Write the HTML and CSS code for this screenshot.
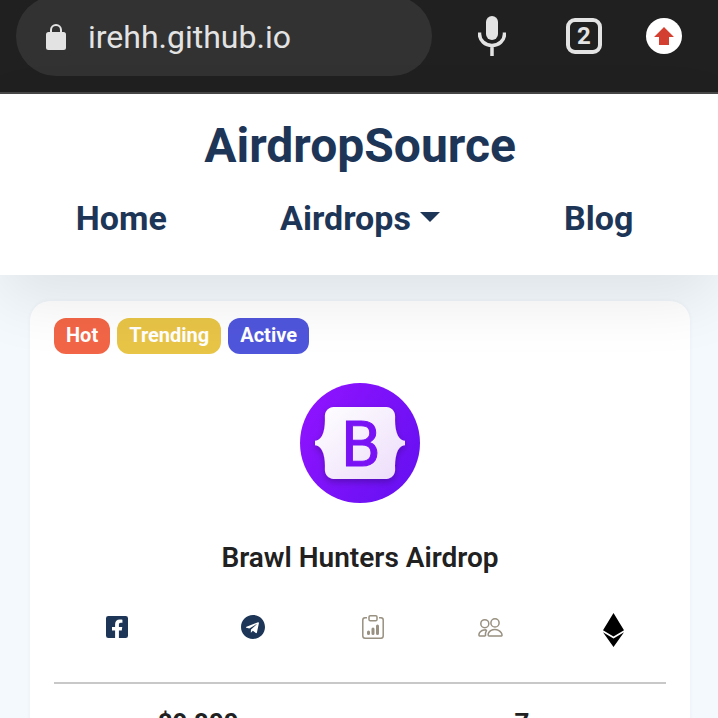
FILE: index.html
```
<!DOCTYPE html>
<html lang="en">
<head>
<meta charset="utf-8">
<meta name="viewport" content="width=device-width, initial-scale=1">
<title>AirdropSource</title>
<link rel="stylesheet" href="styles.css">
</head>
<body>
<div class="browser-bar">
  <label class="address">
    <svg class="lock" viewBox="0 0 20 26" aria-hidden="true"><rect y="8" width="20" height="18" rx="2.5" fill="#e3e3e3"/><path d="M5 9V6a5 5 0 0 1 10 0v3" fill="none" stroke="#e3e3e3" stroke-width="2"/></svg>
    <input class="address-input" type="text" value="irehh.github.io" aria-label="Address" spellcheck="false">
  </label>
  <div class="browser-actions">
    <button class="action" type="button" aria-label="Voice search">
      <svg class="mic" viewBox="0 0 28 40"><rect x="8" width="12" height="24" rx="6" fill="#e3e3e3"/><path d="M1.500 16.500v1.500a12.500 11.500 0 0 0 25 0v-1.500M14 29.500V40" fill="none" stroke="#e3e3e3" stroke-width="3.500"/></svg>
    </button>
    <button class="action tabs" type="button" aria-label="2 tabs">2</button>
    <button class="action update" type="button" aria-label="Update">
      <svg class="arrow" viewBox="0 0 20 18"><path d="M10 0 20 10H15V18H5V10H0Z" fill="#d33f30"/></svg>
    </button>
  </div>
</div>
<header class="site-header">
  <a class="brand" href="#">AirdropSource</a>
  <nav class="nav">
    <a href="#">Home</a>
    <a href="#">Airdrops<span class="caret"></span></a>
    <a href="#">Blog</a>
  </nav>
</header>
<main class="content">
  <article class="card">
    <div class="badges">
      <span class="badge hot">Hot</span>
      <span class="badge trending">Trending</span>
      <span class="badge active">Active</span>
    </div>
    <svg class="logo" viewBox="0 0 120 120" role="img" aria-label="Brawl Hunters">
      <defs>
        <linearGradient id="purple" x1="0" y1="0.200" x2="1" y2="0.800"><stop offset="0" stop-color="#9013ff"/><stop offset="1" stop-color="#6610f2"/></linearGradient>
        <linearGradient id="plate" x1="0" y1="0" x2="1" y2="1"><stop offset="0" stop-color="#ffffff"/><stop offset="1" stop-color="#ecdcfa"/></linearGradient>
        <filter id="drop" x="-20%" y="-20%" width="140%" height="150%"><feDropShadow dx="0" dy="3" stdDeviation="3" flood-color="#000000" flood-opacity="0.250"/></filter>
      </defs>
      <circle cx="60" cy="60" r="60" fill="url(#purple)"/>
      <path filter="url(#drop)" fill="url(#plate)" d="M33.700 24C28.500 24 24.700 28.500 24.900 33.400C25.100 38.100 24.900 44.200 23.400 49.200C21.800 54.200 19.200 57.300 15 57.700V62.300C19.200 62.700 21.800 65.800 23.400 70.800C24.900 75.800 25.100 81.900 24.900 86.600C24.700 91.500 28.500 96 33.700 96H86.300C91.500 96 95.300 91.500 95.100 86.600C94.900 81.900 95.100 75.800 96.600 70.800C98.200 65.800 100.800 62.700 105 62.300V57.700C100.800 57.300 98.200 54.200 96.600 49.200C95.100 44.200 94.900 38.100 95.100 33.400C95.300 28.500 91.500 24 86.300 24Z"/>
      <text class="logo-letter" x="61" y="83" text-anchor="middle">B</text>
    </svg>
    <h1 class="title">Brawl Hunters Airdrop</h1>
    <div class="links">
      <a href="#" aria-label="Facebook"><svg class="facebook" viewBox="0 32 448 448"><path fill="#1d3557" d="M400 32H48A48 48 0 0 0 0 80v352a48 48 0 0 0 48 48h137.250V327.690h-63V256h63v-54.640c0-62.150 37-96.480 93.670-96.480 27.140 0 55.520 4.840 55.520 4.840v61h-31.270c-30.810 0-40.420 19.120-40.420 38.730V256h68.780l-11 71.690h-57.780V480H400a48 48 0 0 0 48-48V80a48 48 0 0 0-48-48z"/></svg></a>
      <a href="#" aria-label="Telegram"><svg class="telegram" viewBox="0 8 496 496"><path fill="#1d3557" d="M248 8C111 8 0 119 0 256s111 248 248 248 248-111 248-248S385 8 248 8zm121.800 169.900l-40.700 191.800c-3 13.600-11.100 16.900-22.400 10.500l-62-45.700-29.900 28.800c-3.300 3.300-6.100 6.100-12.500 6.100l4.400-63.100 114.900-103.800c5-4.400-1.100-6.900-7.700-2.500l-142 89.400-61.200-19.100c-13.300-4.200-13.600-13.300 2.800-19.700l239.100-92.200c11.100-4 20.800 2.700 17.200 19.500z"/></svg></a>
      <a href="#" aria-label="Statistics"><svg class="report" viewBox="0 0 22 24" fill="none" stroke="#989080" stroke-width="1.500"><path d="M5 2.700H3A2.300 2.300 0 0 0 .8 5v16A2.300 2.300 0 0 0 3 23.200h16a2.300 2.300 0 0 0 2.200-2.200V5A2.300 2.300 0 0 0 19 2.700h-2"/><rect x="7" y=".8" width="8" height="5" rx="1.300"/><path d="M6.500 17v1.500M11 14v4.500M15.500 11v7.500" stroke-width="3" stroke-linecap="round"/></svg></a>
      <a href="#" aria-label="Community"><svg class="people" viewBox="0 0 25 19" fill="none" stroke="#989080" stroke-width="1.500"><circle cx="6.800" cy="5.700" r="4"/><circle cx="17" cy="4.900" r="4.100"/><path d="M7.500 18H1.500C.1 18 .8 11.400 8.500 11.700M11 18h12.500c1.500 0-.2-6.600-6.700-6.600S9 18 11 18ZM8.700 11.800C7.700 13.500 7.200 15.500 7.500 18"/></svg></a>
      <a href="#" aria-label="Ethereum"><svg class="ethereum" viewBox="0 0 21 34"><path d="M10.500 0 21 17.300 10.500 23.600 0 17.300ZM0 19.300 10.500 25.600 21 19.300 10.500 34Z"/></svg></a>
    </div>
    <hr class="rule">
    <div class="stats">
      <strong>$9,800</strong>
      <strong>7</strong>
    </div>
  </article>
</main>
</body>
</html>
```

FILE: styles.css
```
* { box-sizing: border-box; }

body {
  margin: 0;
  height: 100vh;
  overflow: hidden;
  background: #f4f9fd;
  color: #212121;
  font-family: Roboto, "Liberation Sans", sans-serif;
}

a { color: inherit; text-decoration: none; }
svg { display: block; }
button { border: 0; padding: 0; background: none; font: inherit; }

.browser-bar {
  display: flex;
  align-items: flex-start;
  justify-content: space-between;
  height: 94px;
  padding: 0 36px 0 16px;
  background: #202020;
  border-bottom: 2px solid #484848;
}

.address {
  display: flex;
  flex: 0 1 416px;
  align-items: center;
  gap: 22px;
  min-width: 0;
  height: 80px;
  margin-top: -4px;
  padding: 2px 30px 0;
  border-radius: 40px;
  background: #323232;
}

.lock { flex: none; width: 20px; height: 26px; }

.address-input {
  flex: 1;
  min-width: 0;
  padding: 0;
  border: 0;
  outline: 0;
  background: none;
  color: #e3e3e3;
  font: 400 32px/40px Roboto, "Liberation Sans", sans-serif;
}

.browser-actions {
  display: flex;
  align-items: center;
  height: 72px;
}

.mic { width: 28px; height: 40px; }

.tabs {
  width: 36px;
  height: 36px;
  margin: 0 44px 0 60px;
  border: 4px solid #e3e3e3;
  border-radius: 9px;
  color: #e3e3e3;
  font-size: 24px;
  font-weight: 700;
  line-height: 28px;
}

.update {
  display: grid;
  place-items: center;
  width: 36px;
  height: 36px;
  border-radius: 50%;
  background: #fff;
}

.arrow { width: 20px; height: 18px; }

.site-header {
  position: relative;
  z-index: 1;
  padding: 20px 0 32px 2px;
  background: #fff;
  box-shadow: 0 24px 64px rgba(0, 0, 0, 0.09);
  color: #1d3557;
  font-weight: 700;
  text-align: center;
}

.brand { display: block; font-size: 48px; line-height: 64px; }

.nav {
  display: grid;
  grid-template-columns: repeat(3, 1fr);
  margin-top: 16px;
  font-size: 34px;
  line-height: 49px;
}

.caret {
  display: inline-block;
  margin-left: 9px;
  border: 10px solid transparent;
  border-top-color: currentColor;
  border-bottom: 0;
  vertical-align: 8px;
}

.content { padding: 26px 28px 0 30px; }

.card {
  padding: 17px 24px 40px;
  border-radius: 20px;
  background: #fff;
  box-shadow: 0 0 4px rgba(30, 60, 90, 0.05);
}

.badges { display: flex; gap: 7px; }

.badge {
  padding: 0 12px 2px;
  border-radius: 12px;
  color: #fff;
  font-size: 20px;
  font-weight: 700;
  line-height: 34px;
}

.hot { background: #f26647; }
.trending { background: #e8c547; }
.active { background: #5056dc; }

.logo { width: 120px; height: 120px; margin: 29px auto 36px; }

.logo-letter {
  fill: #7912f5;
  stroke: #7912f5;
  stroke-width: 1px;
  font-family: Roboto, "Liberation Sans", sans-serif;
  font-size: 63px;
}

.title {
  margin: 0;
  font-size: 28px;
  font-weight: 600;
  line-height: 38px;
  text-align: center;
}

.links {
  display: grid;
  grid-template-columns: 126fr 146fr 94fr 140fr 106fr;
  place-items: center;
  margin-top: 30px;
  height: 40px;
}

.facebook { width: 22px; height: 22px; }
.telegram { width: 24px; height: 24px; }
.report { width: 22px; height: 24px; }
.people { width: 25px; height: 19px; }
.ethereum { width: 21px; height: 34px; margin-top: 6px; }

.rule { margin: 35px 0 20px; border: 0; border-top: 2px solid #c8c8c8; }

.stats {
  display: grid;
  grid-template-columns: 1fr 1fr;
  column-gap: 36px;
  font-size: 26px;
  line-height: 38px;
  text-align: center;
}
```
